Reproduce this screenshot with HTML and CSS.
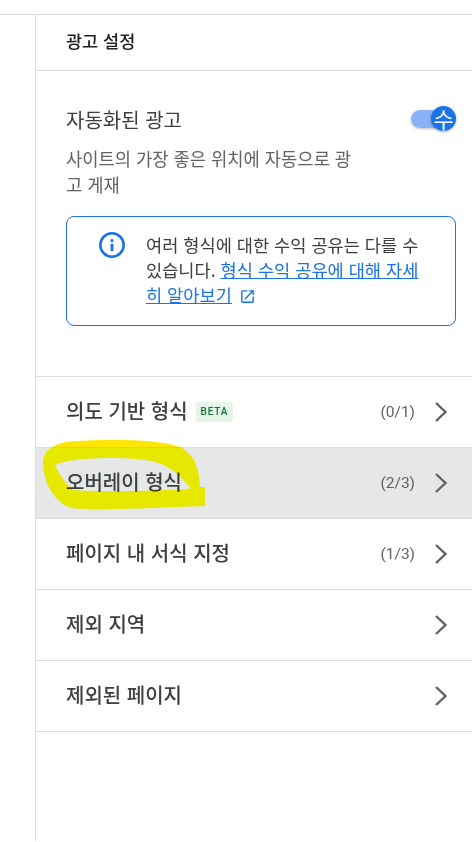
FILE: index.html
```html
<!DOCTYPE html>
<html lang="ko">

<head>
    <title>광고 설정</title>
    <meta charset="UTF-8">
    <meta name="viewport" content="width=device-width, initial-scale=1.0">
    <link rel="stylesheet" href="styles.css">
</head>

<body>
    <div class="page">
        <div class="top-rule"></div>
        <div class="panel">
            <div class="panel-header">광고 설정</div>

            <div class="auto-ads">
                <div class="auto-title-row">
                    <div class="auto-title">자동화된 광고</div>
                    <div class="toggle">
                        <span class="toggle-track"></span>
                        <span class="toggle-knob">수</span>
                    </div>
                </div>
                <p class="auto-desc">사이트의 가장 좋은 위치에 자동으로 광고 게재</p>

                <div class="notice">
                    <svg class="notice-icon" viewBox="0 0 24 24" width="28" height="28">
                        <circle cx="12" cy="12" r="10" fill="none" stroke="#1a73e8" stroke-width="2.2"/>
                        <rect x="10.8" y="10.8" width="2.4" height="6.4" fill="#1a73e8"/>
                        <rect x="10.8" y="7" width="2.4" height="2.4" fill="#1a73e8"/>
                    </svg>
                    <p class="notice-text">여러 형식에 대한 수익 공유는 다를 수 있습니다. <a href="#">형식 수익 공유에 대해 자세히 알아보기</a>
                        <svg class="open-icon" viewBox="0 0 24 24" width="17" height="17">
                            <path fill="#1a73e8" d="M19 19H5V5h7V3H5a2 2 0 0 0-2 2v14a2 2 0 0 0 2 2h14a2 2 0 0 0 2-2v-7h-2v7zM14 3v2h3.59l-9.83 9.83 1.41 1.41L19 6.41V10h2V3h-7z"/>
                        </svg>
                    </p>
                </div>
            </div>

            <div class="row">
                <span class="row-label">의도 기반 형식</span>
                <span class="beta">BETA</span>
                <span class="row-count">(0/1)</span>
                <svg class="chevron" viewBox="0 0 14 22" width="14" height="22"><path d="M2 2l9.5 9L2 20" fill="none" stroke="#5f6368" stroke-width="2.4"/></svg>
            </div>
            <div class="row row-active">
                <span class="row-label">오버레이 형식</span>
                <span class="row-count">(2/3)</span>
                <svg class="chevron" viewBox="0 0 14 22" width="14" height="22"><path d="M2 2l9.5 9L2 20" fill="none" stroke="#5f6368" stroke-width="2.4"/></svg>
            </div>
            <div class="row">
                <span class="row-label">페이지 내 서식 지정</span>
                <span class="row-count">(1/3)</span>
                <svg class="chevron" viewBox="0 0 14 22" width="14" height="22"><path d="M2 2l9.5 9L2 20" fill="none" stroke="#5f6368" stroke-width="2.4"/></svg>
            </div>
            <div class="row">
                <span class="row-label">제외 지역</span>
                <svg class="chevron" viewBox="0 0 14 22" width="14" height="22"><path d="M2 2l9.5 9L2 20" fill="none" stroke="#5f6368" stroke-width="2.4"/></svg>
            </div>
            <div class="row">
                <span class="row-label">제외된 페이지</span>
                <svg class="chevron" viewBox="0 0 14 22" width="14" height="22"><path d="M2 2l9.5 9L2 20" fill="none" stroke="#5f6368" stroke-width="2.4"/></svg>
            </div>
        </div>

        <!-- hand drawn marker over the overlay row -->
        <svg class="marker" viewBox="0 0 472 842" width="472" height="842">
            <defs>
                <linearGradient id="markerInk" gradientUnits="userSpaceOnUse" x1="0" y1="440" x2="0" y2="510">
                    <stop offset="0.1" stop-color="#ffe600"/>
                    <stop offset="0.1" stop-color="#ffff00"/>
                </linearGradient>
            </defs>
            <path fill="url(#markerInk)" fill-rule="evenodd" d="M205 506 L205 487 L200 487 C199 470 196 455 180 447 C160 439 110 439 75 441 C55 442 43 450 43 463 C44 485 55 503 72 508 C90 511 150 508 205 506 Z
                     M55 465 C70 458 110 457 135 459 C165 461 175 470 190 487 L190 489 C150 491 100 492 73 490 C65 483 59 474 55 465 Z"/>
        </svg>
    </div>
</body>

</html>
```

FILE: styles.css
```css
body {
    margin: 0;
    font-family: "Noto Sans CJK KR", Roboto, sans-serif;
    background-color: white;
    color: #3c4043;
}

.page {
    position: relative;
    width: 472px;
    height: 842px;
    padding-top: 14px;
    box-sizing: border-box;
    overflow: hidden;
}

.top-rule {
    height: 1px;
    background-color: #dadce0;
}

.panel {
    box-sizing: border-box;
    height: 826px;
    margin-left: 35px;
    border-left: 1px solid #dadce0;
}

.panel-header {
    box-sizing: border-box;
    height: 56px;
    padding: 15px 0 0 30px;
    border-bottom: 1px solid #dadce0;
    font-size: 17.5px;
    line-height: 22px;
    font-weight: 500;
    color: #202124;
}

.auto-ads {
    box-sizing: border-box;
    height: 306px;
    padding: 33px 16px 0 30px;
    border-bottom: 1px solid #dadce0;
}

.auto-title-row {
    display: flex;
    justify-content: space-between;
    align-items: center;
    height: 30px;
}

.auto-title {
    font-size: 20px;
    color: #3c4043;
}

.toggle {
    position: relative;
    width: 45px;
    height: 26px;
}

.toggle-track {
    position: absolute;
    left: 0;
    top: 4px;
    width: 32px;
    height: 18px;
    border-radius: 9px;
    background-color: #8ab2f6;
    box-shadow: 0 1px 3px rgba(0, 0, 0, 0.25);
}

.toggle-knob {
    position: absolute;
    left: 20px;
    top: 0;
    width: 25px;
    height: 25px;
    border-radius: 50%;
    background-color: #1a73e8;
    color: white;
    font-size: 22px;
    line-height: 25px;
    text-align: center;
    box-shadow: 0 1px 3px rgba(0, 0, 0, 0.3);
}

.auto-desc {
    width: 288px;
    margin: 11px 0 0;
    font-size: 17.7px;
    line-height: 26px;
    word-break: break-all;
    color: #5f6368;
}

.notice {
    display: flex;
    box-sizing: border-box;
    width: 390px;
    height: 110px;
    margin-top: 19px;
    padding: 15px 36px 0 31px;
    gap: 20px;
    border: 1px solid #1a73e8;
    border-radius: 8px;
}

.notice-icon {
    flex: none;
    margin-top: -1px;
}

.notice-text {
    margin: 0;
    font-size: 17.6px;
    line-height: 25px;
    word-break: break-all;
    color: #3c4043;
}

.notice-text a {
    color: #1a73e8;
}

.open-icon {
    vertical-align: -3px;
    margin-left: 2px;
}

.row {
    display: flex;
    align-items: center;
    box-sizing: border-box;
    height: 71px;
    padding: 0 24px 0 30px;
    border-bottom: 1px solid #dadce0;
}

.row-active {
    background-color: #e6e8e8;
}

.row-label {
    padding-bottom: 4px;
    font-size: 20px;
    font-weight: 500;
    color: #3c4043;
}

.beta {
    margin-left: 8px;
    padding: 0 5px;
    height: 20px;
    border-radius: 3px;
    background-color: #e6f4ea;
    color: #137333;
    font-family: Roboto, sans-serif;
    font-size: 10px;
    font-weight: 500;
    line-height: 20px;
    letter-spacing: 0.8px;
}

.row-count {
    margin-left: auto;
    font-family: Roboto, sans-serif;
    font-size: 15.5px;
    color: #5f6368;
}

.chevron {
    margin-left: 19px;
}

.row > .row-label + .chevron {
    margin-left: auto;
}

.marker {
    position: absolute;
    left: 0;
    top: 0;
    pointer-events: none;
    mix-blend-mode: multiply;
}
```
